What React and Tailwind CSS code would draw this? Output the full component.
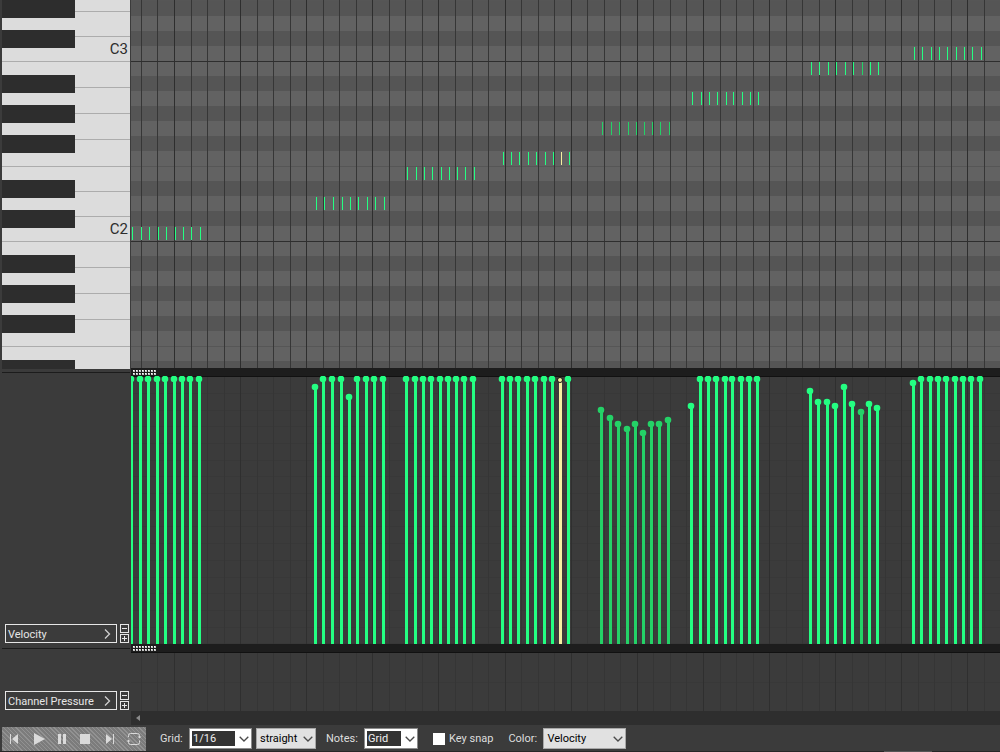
import React from 'react';

const GREEN = '#24ff82';
const SOFT_GREEN = '#24d267';
const SELECTED = '#f5f0a0';

const KEYBOARD_WIDTH = 131;
const ROW = 15;
const LANE_TOP = 376;

// white key heights from top to bottom, C keys carry a label
const whiteKeys = [
  { h: 'h-[12px]' },
  { h: 'h-[25px]' },
  { h: 'h-[25px]', label: 'C3' },
  { h: 'h-[26px]' },
  { h: 'h-[26px]' },
  { h: 'h-[26px]' },
  { h: 'h-[27px]' },
  { h: 'h-[25px]' },
  { h: 'h-[25px]' },
  { h: 'h-[25px]', label: 'C2' },
  { h: 'h-[26px]' },
  { h: 'h-[26px]' },
  { h: 'h-[26px]' },
  { h: 'h-[27px]' },
  { h: 'h-[26px]' },
];

const blackRows = [1, 31, 76, 106, 136, 181, 211, 256, 286, 316, 361];
const octaveLines = [61, 241];
const efLines = [0, 166, 346];

const MAX = 379;
const phrases = [
  { top: 227, x: [132, 141, 149, 158, 166, 175, 183, 191, 200], vel: [] },
  { top: 197, x: [316, 324, 333, 342, 350, 358, 367, 375, 384], vel: [387, MAX, MAX, MAX, 397] },
  { top: 167, x: [407, 416, 424, 432, 441, 449, 457, 465, 474], vel: [] },
  { top: 152, x: [503, 511, 519, 528, 536, 545, 553, 561, 569], vel: [], selected: 7 },
  { top: 122, x: [602, 611, 619, 628, 636, 644, 652, 660, 669], vel: [410, 418, 424, 429, 424, 433, 424, 424, 420] },
  { top: 92, x: [692, 701, 709, 717, 726, 733, 742, 750, 758], vel: [406] },
  { top: 62, x: [811, 819, 828, 836, 845, 853, 862, 870, 878], vel: [391, 402, 402, 406, 387, 404, 412, 404, 408] },
  { top: 47, x: [914, 922, 931, 939, 947, 956, 964, 972, 981], vel: [383] },
];

const notes = phrases.flatMap((p) =>
  p.x.map((x, i) => {
    const vel = p.vel[i] || MAX;
    const selected = p.selected === i;
    return {
      x: x - KEYBOARD_WIDTH,
      top: p.top,
      vel: vel - LANE_TOP,
      selected,
      color: selected ? SELECTED : vel > 408 ? SOFT_GREEN : GREEN,
    };
  })
);

const gridLines = Array.from({ length: 160 }, (_, i) => ({
  x: Math.floor(10.45 + i * 16.53),
  beat: i % 4 === 2,
}));

const VerticalLines = ({ color, beatColor }) =>
  gridLines.map((l) => (
    <rect key={l.x} x={l.x} y="0" width="1" height="100%" fill={l.beat ? beatColor : color} />
  ));

const Keyboard = () => (
  <div className="relative h-[369px] shrink-0 overflow-hidden ml-0.5 mr-px bg-[#dcdcdc]">
    {whiteKeys.map((k, i) => (
      <div key={i} className={`${k.h} flex items-end justify-end border-b border-[#acacac] pr-0.5`}>
        {k.label && <span className="text-[15px] leading-6 text-[#2d2d2d]">{k.label}</span>}
      </div>
    ))}
    {blackRows.map((y) => (
      <div key={y} className="absolute left-0 w-[73px] h-[18px] bg-[#2d2d2d]" style={{ top: y - 1 }} />
    ))}
  </div>
);

const NoteGrid = () => (
  <svg className="block w-full h-[368px] shrink-0 bg-[#626262]" shapeRendering="crispEdges" role="img" aria-label="Notes">
    {blackRows.map((y) => (
      <rect key={y} x="0" y={y} width="100%" height={ROW} fill="#555" />
    ))}
    {efLines.map((y) => (
      <rect key={y} x="0" y={y} width="100%" height="1" fill="#565656" />
    ))}
    <VerticalLines color="#363636" beatColor="#2e2e2e" />
    {octaveLines.map((y) => (
      <rect key={y} x="0" y={y} width="100%" height="1" fill="#2e2e2e" />
    ))}
    {notes.map((n) => (
      <rect key={n.x} x={n.x} y={n.top} width="1" height="13" fill={n.color} />
    ))}
  </svg>
);

const Splitter = () => (
  <div className="h-2 shrink-0 bg-[#1d1d1d] px-0.5 py-0.5">
    <svg className="block" width="24" height="5" shapeRendering="crispEdges" aria-hidden="true">
      {[0, 3].map((y) =>
        [0, 3, 6, 9, 12, 15, 18, 21].map((x) => (
          <g key={`${x}-${y}`}>
            <rect x={x} y={y} width="2" height="2" fill="#c4c4c4" />
            <rect x={x} y={y} width="1" height="1" fill="#fff" />
          </g>
        ))
      )}
    </svg>
  </div>
);

const VelocityLane = () => (
  <div className="flex-1 min-h-0 overflow-hidden">
    <svg className="block w-full h-full" role="img" aria-label="Velocity lane">
      <g shapeRendering="crispEdges">
        {Array.from({ length: 40 }, (_, i) => (
          <rect key={i} x="0" y={Math.floor(17.3 + i * 16.7)} width="100%" height="1" fill="#383838" />
        ))}
        <VerticalLines color="#353535" beatColor="#2f2f2f" />
        <rect x="0" y="0" width="100%" height="1" fill="#111" />
      </g>
      {notes.map((n) => (
        <g key={n.x} fill={n.color}>
          <svg y={n.vel} width="100%" height="100%">
            <rect x={n.x - 2} y="0" width="3" height="100%" shapeRendering="crispEdges" />
          </svg>
          {n.selected ? (
            <circle cx={n.x - 1} cy={n.vel + 1} r="2.5" stroke="#111" />
          ) : (
            <circle cx={n.x - 1} cy={n.vel} r="3.3" />
          )}
        </g>
      ))}
    </svg>
  </div>
);

const PressureLane = () => (
  <svg className="block w-full h-[59px] shrink-0" shapeRendering="crispEdges" role="img" aria-label="Channel pressure lane">
    <rect x="0" y="30" width="100%" height="1" fill="#383838" />
    <VerticalLines color="#353535" beatColor="#2f2f2f" />
    <rect x="0" y="0" width="100%" height="1" fill="#111" />
  </svg>
);

const SmallButton = ({ label, plus }) => (
  <button type="button" aria-label={label} className="block w-[9px] h-[9px] border border-[#e6e6e6]">
    <svg className="block" width="7" height="7" shapeRendering="crispEdges" fill="#e6e6e6">
      <rect x="1" y="3" width="5" height="1" />
      {plus && <rect x="3" y="1" width="1" height="5" />}
    </svg>
  </button>
);

const LaneHeader = ({ name }) => (
  <div className="flex w-full gap-[3px] pl-[5px] pr-0.5">
    <button type="button" className="flex flex-1 h-[19px] items-center justify-between border border-[#e6e6e6] pl-0.5 pr-[5px] text-[#e6e6e6]">
      <span className="pt-px">{name}</span>
      <svg width="7" height="10" viewBox="0 0 7 10" fill="none" stroke="#cfcfcf" strokeWidth="1.3">
        <path d="M1 0.5 L5.5 5 L1 9.5" />
      </svg>
    </button>
    <div className="flex flex-col gap-px">
      <SmallButton label={`Remove ${name} lane`} />
      <SmallButton label={`Add ${name} lane`} plus />
    </div>
  </div>
);

const Chevron = () => (
  <svg className="block" width="10" height="6" viewBox="0 0 10 6" fill="none" stroke="#4a4a4a" strokeWidth="1.3">
    <path d="M0.7 0.7 L5 5 L9.3 0.7" />
  </svg>
);

const transport = [
  { label: 'Go to start', icon: <path d="M8 7h1v10H8zM16 7v10L10 12z" /> },
  { label: 'Play', icon: <path d="M8 6v12L19 12z" /> },
  { label: 'Pause', icon: <path d="M8 7h3v10H8zM13 7h3v10h-3z" /> },
  { label: 'Stop', icon: <path d="M6 7h10v10H6z" /> },
  { label: 'Go to end', icon: <path d="M8 7v10L14 12zM15 7h1v10h-1z" /> },
  {
    label: 'Repeat',
    icon: (
      <>
        <path
          d="M6.5 10V8.500Q6.500 6.500 8.500 6.500H15.500Q17.500 6.500 17.500 8.500V10M17.500 13.500V15.500Q17.500 17.500 15.500 17.500H8.500Q6.500 17.500 6.500 15.500V14"
          fill="none"
          stroke="#dadada"
        />
        <path d="M15.500 9.500h4L17.500 11.500zM4.500 14.500h4L6.500 12.500z" />
      </>
    ),
  },
];

const Transport = () => (
  <div className="flex h-6 bg-[repeating-linear-gradient(45deg,#7c7c7c_0px,#7c7c7c_2px,#929292_2px,#929292_3px)]">
    {transport.map((t) => (
      <button key={t.label} type="button" aria-label={t.label} className="w-6 h-6">
        <svg className="block" width="24" height="24" fill="#dadada">
          {t.icon}
        </svg>
      </button>
    ))}
  </div>
);

const Combo = ({ id, value, width }) => (
  <div className="flex h-[21px] items-center border border-[#8c8c8c] bg-white p-0.5">
    <input id={id} defaultValue={value} className={`${width} h-[15px] bg-[#333] pl-px text-[#f0f0f0] outline-none`} />
    <button type="button" aria-label={`${value} options`} className="flex w-[14px] justify-end">
      <Chevron />
    </button>
  </div>
);

const Select = ({ id, label, options, width }) => (
  <div className="relative">
    <select id={id} aria-label={label} className={`${width} block h-[21px] appearance-none border border-[#a8a8a8] bg-[#e1e1e1] pl-[3px] text-black`}>
      {options.map((o) => (
        <option key={o}>{o}</option>
      ))}
    </select>
    <div className="absolute right-[3px] top-2 pointer-events-none">
      <Chevron />
    </div>
  </div>
);

const Toolbar = () => (
  <div className="shrink-0">
    <div className="flex h-[26px] pl-0.5 pt-0.5">
      <Transport />
      <div className="flex h-[23px] items-center">
        <div className="flex items-center gap-1 pl-[14px]">
          <label htmlFor="grid" className="w-[25px]">Grid:</label>
          <Combo id="grid" value="1/16" width="w-[43px]" />
          <Select id="grid-type" label="Grid type" options={['straight', 'triplet', 'dotted', 'swing']} width="w-[60px]" />
        </div>
        <div className="flex items-center pl-[10px]">
          <label htmlFor="notes" className="w-[38px]">Notes:</label>
          <Combo id="notes" value="Grid" width="w-[34px]" />
        </div>
        <label className="flex items-center gap-1 pl-[15px]">
          <input type="checkbox" className="w-3 h-3 appearance-none bg-white border border-white checked:bg-gray-500" />
          <span>Key snap</span>
        </label>
        <div className="flex items-center pl-[15px]">
          <label htmlFor="color" className="w-[35px]">Color:</label>
          <Select id="color" options={['Velocity', 'Channel', 'Pitch']} width="w-[83px]" />
        </div>
      </div>
    </div>
    <div className="flex h-px justify-end bg-[#262626] pr-[68px]">
      <div className="w-12 bg-[#555]" />
    </div>
  </div>
);

export default function App() {
  return (
    <main className="flex h-screen flex-col overflow-hidden bg-[#3b3b3b] font-['Roboto',sans-serif] text-[11px] leading-[15px] text-[#dedede]">
      <div className="flex flex-1 min-h-0">
        <aside className="flex w-[131px] shrink-0 flex-col">
          <Keyboard />
          <div className="mt-[3px] ml-0.5 mr-px border-t border-[#1c1c1c]" />
          <div className="flex flex-1 items-end pb-[5px]">
            <LaneHeader name="Velocity" />
          </div>
          <div className="ml-0.5 mr-px border-t border-[#1c1c1c]" />
          <div className="flex h-[76px] shrink-0 items-end pb-[15px]">
            <LaneHeader name="Channel Pressure" />
          </div>
        </aside>

        <section className="flex flex-1 min-w-0 flex-col">
          <NoteGrid />
          <Splitter />
          <VelocityLane />
          <Splitter />
          <PressureLane />
          {/* Scrollbar */}
          <div className="flex h-[14px] shrink-0 items-center bg-[#2e2e2e] pl-[5px]">
            <button type="button" aria-label="Scroll left">
              <svg className="block" width="4" height="6" fill="#8a8a8a">
                <path d="M4 0v6L0 3z" />
              </svg>
            </button>
          </div>
        </section>
      </div>
      <Toolbar />
    </main>
  );
}
